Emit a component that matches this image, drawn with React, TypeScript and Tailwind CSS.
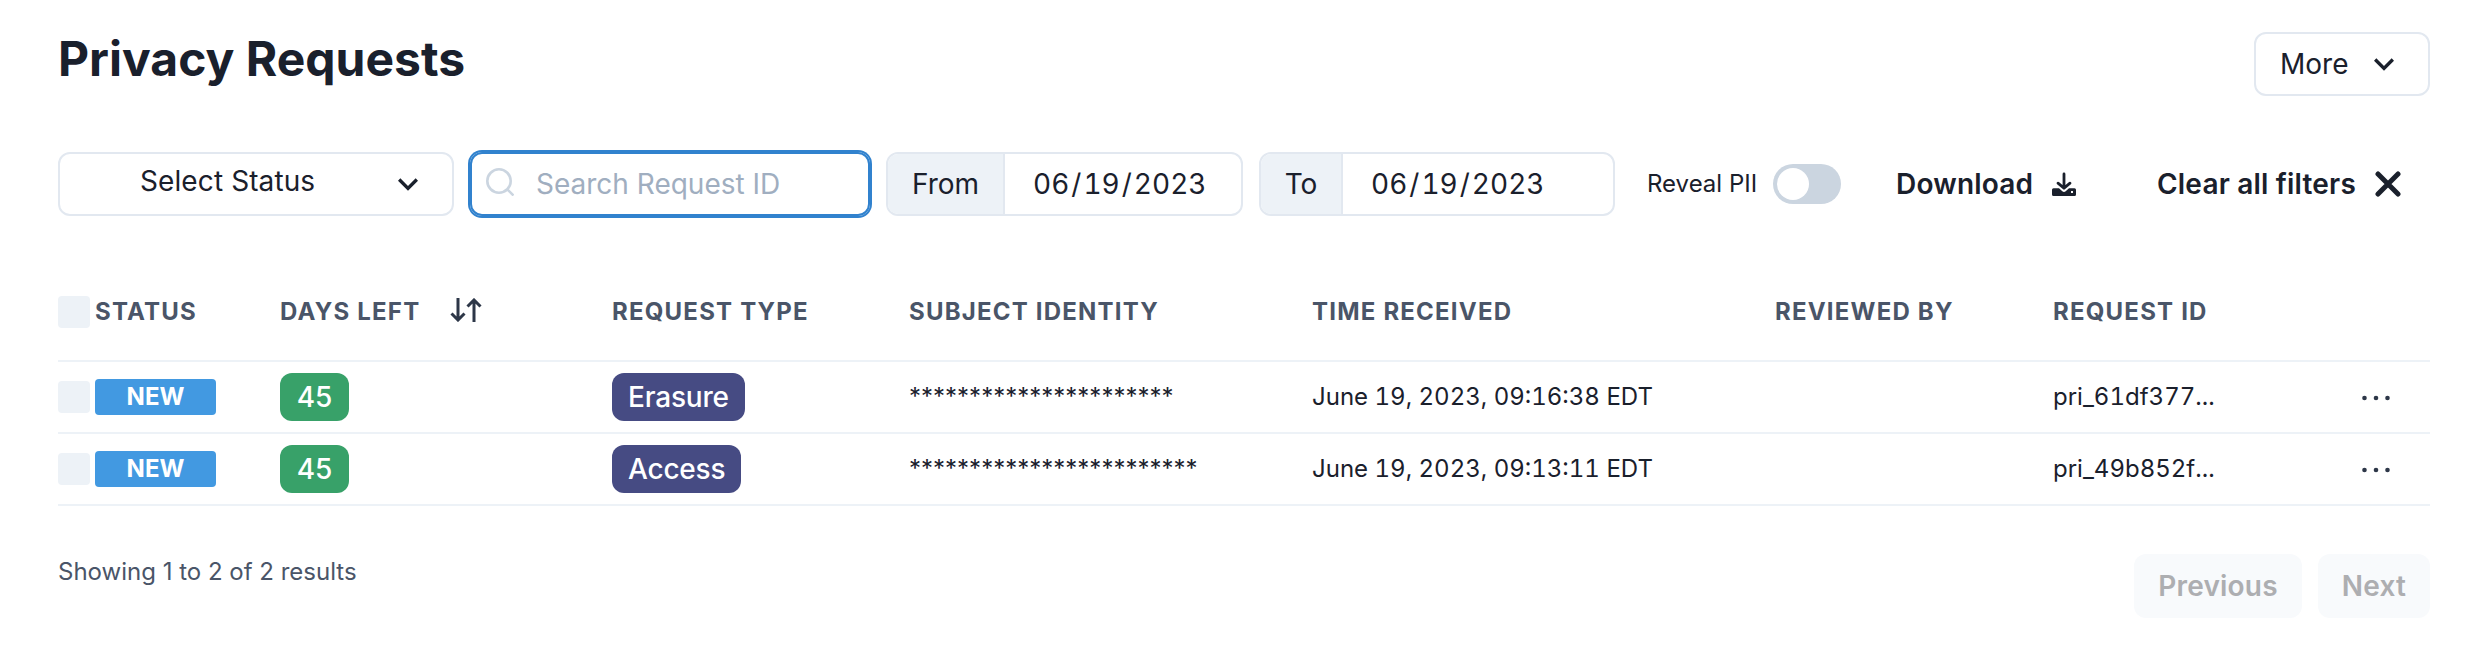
import React from "react";

const COLS = "grid grid-cols-[37px_185px_332px_297px_403px_463px_278px_377px] items-center";

function Chevron() {
  return (
    <svg viewBox="0 0 24 24" className="size-10 shrink-0" fill="#1a202c">
      <path d="M16.59 8.59L12 13.17 7.41 8.59 6 10l6 6 6-6z" />
    </svg>
  );
}

function Checkbox() {
  return <span className="block size-8 rounded-sm bg-[#edf2f7]" />;
}

function DateField({ label, addon, box }: { label: string; addon: string; box: string }) {
  return (
    <div className={`flex h-16 shrink-0 overflow-hidden rounded-xl border-2 border-[#e2e8f0] ${box}`}>
      <div className={`flex items-center justify-center border-r-2 border-[#e2e8f0] bg-[#edf2f7] text-[28px] ${addon}`}>
        <span>{label}</span>
      </div>
      <div className="flex items-center pl-7 text-[28px]">
        <span className="tabular-nums">
          06<span className="px-0.5">/</span>19<span className="px-0.5">/</span>2023
        </span>
      </div>
    </div>
  );
}

const rows = [
  { type: "Erasure", identity: "**********************", time: "June 19, 2023, 09:16:38 EDT", id: "pri_61df377..." },
  { type: "Access", identity: "************************", time: "June 19, 2023, 09:13:11 EDT", id: "pri_49b852f..." },
];

export default function App() {
  return (
    <main className="h-[668px] w-[2478px] bg-white pr-12 pl-[58px] pt-8 font-['Inter',sans-serif] text-[#1a202c]">
      <header className="flex h-16 items-start justify-between">
        <h1 className="-mt-[3px] text-[48px] leading-[60px] font-bold">
          <span>Privacy Requests</span>
        </h1>
        <button className="flex h-16 w-44 items-center rounded-xl border-2 border-[#e2e8f0] pl-6 text-[28px]">
          <span>More</span>
          <span className="ml-auto mr-6">
            <Chevron />
          </span>
        </button>
      </header>

      <section className="mt-14 flex h-16 items-center">
        <button className="flex h-16 w-[396px] shrink-0 items-center rounded-xl border-2 border-[#e2e8f0] pl-20 text-[28px]">
          <span className="-mt-[7px] tracking-[0.1px]">Select Status</span>
          <span className="ml-auto mr-6">
            <Chevron />
          </span>
        </button>
        <div className="ml-4 flex h-16 w-[400px] shrink-0 items-center rounded-xl border-2 border-[#3182ce] pl-[14px] text-[28px] text-[#a0aec0] shadow-[0_0_0_2px_#3182ce]">
          <svg viewBox="0 0 28 28" className="-mt-1 size-7" fill="none" stroke="#cbd5e0" strokeWidth="2.6">
            <circle cx="13" cy="13" r="11.7" />
            <path d="M21 21l6.5 6.5" />
          </svg>
          <span className="ml-[22px]">Search Request ID</span>
        </div>
        <DateField label="From" box="ml-4 w-[357px]" addon="w-[117px]" />
        <DateField label="To" box="ml-4 w-[356px]" addon="w-[82px]" />
        <span className="ml-8 w-[126px] text-[24px]">
          <span>Reveal PII</span>
        </span>
        <span className="flex h-10 w-[68px] items-center rounded-full bg-[#cbd5e0] px-1">
          <span className="size-8 rounded-full bg-white" />
        </span>
        <span className="ml-[55px] flex w-[261px] items-center text-[28px] font-semibold tracking-[0.2px]">
          <span className="w-[156px]">Download</span>
          <svg viewBox="0 0 24 24" className="size-6" fill="#1a202c">
            <path
              d="M12 2v14M6 11.2l6 5 6-5"
              fill="none"
              stroke="#1a202c"
              strokeWidth="2.8"
              strokeLinecap="round"
              strokeLinejoin="round"
            />
            <path
              fillRule="evenodd"
              d="M1.5 16.3H7l3.3 2.9a2.6 2.6 0 0 0 3.4 0l3.3-2.9h5.5a1.5 1.5 0 0 1 1.5 1.5v4.7a1.5 1.5 0 0 1-1.5 1.5h-21a1.5 1.5 0 0 1-1.5-1.5v-4.7a1.5 1.5 0 0 1 1.5-1.5zM19 19v2h2v-2z"
            />
          </svg>
        </span>
        <span className="flex items-center text-[28px] font-semibold tracking-[0.2px] whitespace-nowrap">
          <span className="w-[218px]">Clear all filters</span>
          <svg viewBox="0 0 26 26" className="size-[26px]" stroke="#1a202c" strokeWidth="5" strokeLinecap="round">
            <path d="M3 3l20 20M23 3L3 23" />
          </svg>
        </span>
      </section>

      <section className="mt-[72px]">
        <div className={`h-[74px] border-b-2 border-[#edf2f7] pb-6 text-[24px] font-bold tracking-[1.2px] text-[#4a5568] ${COLS}`}>
          <Checkbox />
          <span>STATUS</span>
          <span className="flex items-center">
            <span className="w-[170px]">DAYS LEFT</span>
            <svg viewBox="0 0 32 24" className="-mt-1 h-6 w-8" fill="none" stroke="#2d3748" strokeWidth="3">
              <path d="M8 0v22M1.5 15.5L8 22l6.5-6.5M24 24V2M17.5 8.5L24 2l6.5 6.5" />
            </svg>
          </span>
          <span>REQUEST TYPE</span>
          <span>SUBJECT IDENTITY</span>
          <span>TIME RECEIVED</span>
          <span>REVIEWED BY</span>
          <span>REQUEST ID</span>
        </div>
        {rows.map((r) => (
          <div key={r.id} className={`h-[72px] border-b-2 border-[#edf2f7] text-[24px] ${COLS}`}>
            <Checkbox />
            <span className="flex h-9 w-[121px] items-center justify-center rounded-sm bg-[#4299e1] font-bold text-white">
              <span>NEW</span>
            </span>
            <span className="flex h-12 w-[69px] items-center justify-center rounded-xl bg-[#38a169] text-[28px] font-medium text-white">
              <span>45</span>
            </span>
            <span className="flex">
              <span className="flex h-12 items-center rounded-xl bg-[#464b83] px-4 text-[28px] font-medium tracking-[-0.2px] text-white">
                {r.type}
              </span>
            </span>
            <span>{r.identity}</span>
            <span className="tabular-nums">{r.time}</span>
            <span />
            <span className="flex items-center">
              <span className="w-[309px] tabular-nums">{r.id}</span>
              <svg viewBox="0 0 28 6" className="mt-0.5 h-1.5 w-7" fill="#2d3748">
                <circle cx="2.5" cy="3" r="2.3" />
                <circle cx="14" cy="3" r="2.3" />
                <circle cx="25.5" cy="3" r="2.3" />
              </svg>
            </span>
          </div>
        ))}
      </section>

      <footer className="mt-12 flex items-start justify-between">
        <p className="text-[24px] leading-9 text-[#4a5568]">
          <span>Showing 1 to 2 of 2 results</span>
        </p>
        <div className="flex gap-4 text-[28px] font-semibold tracking-[0.2px] text-[#adaeb1]">
          <button className="h-16 w-[168px] rounded-xl bg-[#f8fafc]">
            <span>Previous</span>
          </button>
          <button className="h-16 w-28 rounded-xl bg-[#f8fafc]">
            <span>Next</span>
          </button>
        </div>
      </footer>
    </main>
  );
}
